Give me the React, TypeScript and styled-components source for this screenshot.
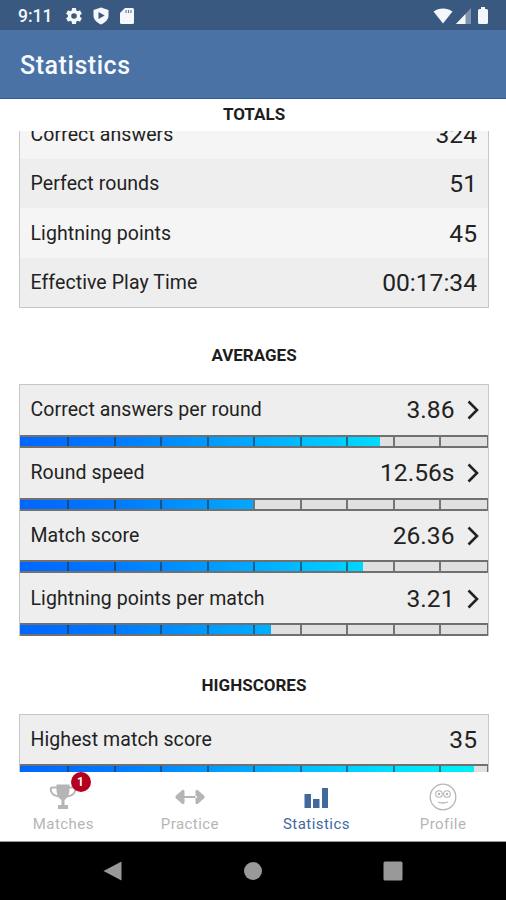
import React from 'react';
import styled, { createGlobalStyle } from 'styled-components';

const GlobalStyle = createGlobalStyle`
  * { box-sizing: border-box; }
  body { margin: 0; background: #fff; font-family: Roboto, sans-serif; color: #222; }
`;

const Screen = styled.div`
  display: flex;
  flex-direction: column;
  width: 506px;
  height: 900px;
  overflow: hidden;
  background: #fff;
`;

const StatusBar = styled.div`
  display: flex;
  flex: none;
  align-items: center;
  height: 30px;
  padding: 1px 15px 0 18px;
  background: #3a5980;
  color: #f4f8fd;
`;

const Clock = styled.span`
  width: 48px;
  font-size: 17.5px;
  font-weight: 500;
  letter-spacing: 0;
  line-height: 20px;
`;

const StatusIcons = styled.div<{ $gap: number; $end?: boolean }>`
  display: flex;
  align-items: center;
  gap: ${(p) => p.$gap}px;
  margin-left: ${(p) => (p.$end ? 'auto' : '0')};
`;

const AppBar = styled.header`
  display: flex;
  flex: none;
  align-items: center;
  height: 69px;
  padding: 4px 20px 0;
  border-bottom: 1px solid #2c5c96;
  background: #4a72a5;
`;

const Title = styled.h1`
  margin: 0;
  color: #f6faff;
  font-size: 25px;
  font-weight: 500;
  letter-spacing: 0.55px;
  line-height: 30px;
`;

const Content = styled.main`
  flex: none;
  height: 673px;
  overflow: hidden;
`;

const Heading = styled.h2<{ $height: number; $top: number }>`
  height: ${(p) => p.$height}px;
  margin: 0;
  padding: ${(p) => p.$top}px 0 0 2px;
  font-size: 17px;
  font-weight: 700;
  line-height: 20px;
  text-align: center;
  color: #1d1d1d;
`;

const Totals = styled.section`
  display: flex;
  flex-direction: column;
  justify-content: flex-end;
  height: 177px;
  margin: 0 17px 0 19px;
  overflow: hidden;
  border: 1px solid #c6c6c6;
  border-top: 0;
`;

const Card = styled.section`
  margin: 0 17px 0 19px;
  border: 1px solid #c6c6c6;
  border-bottom: 0;
  background: #eee;
`;

const Row = styled.div<{ $light?: boolean; $height?: number }>`
  display: flex;
  flex: none;
  align-items: center;
  justify-content: space-between;
  height: ${(p) => p.$height ?? 49.3}px;
  padding: 1px 11px 0 10.5px;
  background: ${(p) => (p.$light ? '#f5f5f5' : '#eee')};
`;

const Label = styled.span`
  font-size: 19.5px;
  letter-spacing: 0.08px;
  line-height: 24px;
`;

const Value = styled.span`
  display: flex;
  align-items: center;
  font-size: 24.6px;
  line-height: 30px;
  letter-spacing: 0;
`;

const Chevron = styled.svg`
  width: 12px;
  height: 20px;
  margin: 0 -1.5px 0 12px;
`;

const Meter = styled.div<{ $height: number }>`
  display: flex;
  position: relative;
  height: ${(p) => p.$height}px;
  border: 2px solid #707070;
  border-width: 2px 1px 2px 0;
  background: #e0e0e0;
`;

const Fill = styled.div`
  height: 100%;
  background: linear-gradient(90deg, #0066ff 0, #0078ff 90px, #00aaff 234px, #00ddff 360px, #00f4f6 468px);
  background-size: 468px 100%;
`;

const Ticks = styled.div`
  position: absolute;
  inset: 0;
  display: grid;
  grid-template-columns: 49px repeat(8, 46.5px) 1fr;
`;

const Tick = styled.i`
  border-right: 2px solid rgba(35, 45, 55, 0.6);
  &:last-child { border: 0; }
`;

const Gap = styled.div<{ $height: number }>`
  height: ${(p) => p.$height}px;
`;

const Tabs = styled.nav`
  display: grid;
  flex: none;
  grid-template-columns: repeat(4, 126.6px);
  height: 70px;
  border-bottom: 1px solid #999;
  background: #fff;
`;

const Tab = styled.div<{ $active?: boolean }>`
  display: flex;
  position: relative;
  flex-direction: column;
  align-items: center;
  padding-top: 11px;
  color: ${(p) => (p.$active ? '#42699d' : '#b5b5b5')};
  font-size: 15px;
  letter-spacing: ${(p) => (p.$active ? '0.45px' : '0.45px')};
  line-height: 20px;
  svg { width: 30px; height: 28px; margin-bottom: 3px; }
`;

const Badge = styled.span`
  position: absolute;
  top: 0;
  left: 70.5px;
  width: 20px;
  height: 20px;
  border-radius: 50%;
  background: #b5001d;
  color: #fff;
  font-size: 12px;
  font-weight: 700;
  letter-spacing: 0;
  line-height: 20px;
  text-align: center;
`;

const SystemBar = styled.footer`
  display: flex;
  flex: none;
  align-items: center;
  justify-content: space-between;
  height: 58px;
  padding: 0 103px 0 102px;
  background: #000;
  svg { width: 20px; height: 20px; }
`;

function Bar({ width, height = 13 }: { width: number; height?: number }) {
  return (
    <Meter $height={height}>
      <Fill style={{ width }} />
      <Ticks>{Array.from({ length: 10 }, (_, i) => <Tick key={i} />)}</Ticks>
    </Meter>
  );
}

const averages = [
  { label: 'Correct answers per round', value: '3.86', width: 360 },
  { label: 'Round speed', value: '12.56s', width: 233 },
  { label: 'Match score', value: '26.36', width: 343 },
  { label: 'Lightning points per match', value: '3.21', width: 251 },
];

const totals = [
  ['Correct answers', '324'],
  ['Perfect rounds', '51'],
  ['Lightning points', '45'],
  ['Effective Play Time', '00:17:34'],
];

export default function App() {
  return (
    <>
      <GlobalStyle />
      <Screen>
        <StatusBar>
          <Clock>9:11</Clock>
          <StatusIcons $gap={11}>
            <svg width="16" height="16" viewBox="2 2 20 20" fill="currentColor"><path d="M19.43 12.98c.04-.32.07-.64.07-.98s-.03-.66-.07-.98l2.11-1.65c.19-.15.24-.42.12-.64l-2-3.46c-.12-.22-.39-.3-.61-.22l-2.49 1c-.52-.4-1.08-.73-1.69-.98l-.38-2.65A.49.49 0 0 0 14 2h-4c-.25 0-.46.18-.49.42l-.38 2.65c-.61.25-1.17.59-1.69.98l-2.49-1c-.23-.09-.49 0-.61.22l-2 3.46c-.13.22-.07.49.12.64l2.11 1.65c-.04.32-.07.65-.07.98s.03.66.07.98l-2.11 1.65c-.19.15-.24.42-.12.64l2 3.46c.12.22.39.3.61.22l2.49-1c.52.4 1.08.73 1.69.98l.38 2.65c.03.24.24.42.49.42h4c.25 0 .46-.18.49-.42l.38-2.65c.61-.25 1.17-.59 1.69-.98l2.49 1c.23.09.49 0 .61-.22l2-3.46a.5.5 0 0 0-.12-.64l-2.11-1.65zM12 15.500a3.500 3.500 0 1 1 0-7 3.500 3.500 0 0 1 0 7z" /></svg>
            <svg width="16" height="18" viewBox="0 0 16 18"><path d="M8 .5 15.500 3v5.500c0 4-3 7-7.500 9-4.500-2-7.500-5-7.500-9V3z" fill="currentColor" /><path d="m5.500 5 6.200 3.500-6.200 3.500z" fill="#3a5980" /></svg>
            <svg width="14" height="16" viewBox="0 0 14 16"><path d="M5 0h7.500Q14 0 14 1.500v13q0 1.500-1.500 1.500h-11Q0 16 0 14.500V5z" fill="currentColor" /><path d="M6 2v3M8.500 2v3M11 2v3" stroke="#3a5980" strokeWidth="1.200" opacity=".75" /></svg>
          </StatusIcons>
          <StatusIcons $gap={3} $end>
            <svg width="20" height="16" viewBox="0 0 20 16"><path d="M.5 3.500C6-.6 14-.6 19.500 3.500L10 15.500z" fill="currentColor" /></svg>
            <svg width="15" height="16" viewBox="0 0 15 16"><path d="M15 0v16H0z" fill="#8094af" /><path d="M9.500 6v10H0z" fill="currentColor" /></svg>
            <svg width="17" height="17" viewBox="1.500 0 17 17"><path d="M8.500 0h4v2h1.500q1.500 0 1.500 1.500v12q0 1.500-1.500 1.500h-7Q5.500 17 5.500 15.500v-12Q5.500 2 7 2h1.500z" fill="currentColor" /></svg>
          </StatusIcons>
        </StatusBar>
        <AppBar><Title>Statistics</Title></AppBar>
        <Content>
          <Heading $height={32} $top={5}>TOTALS</Heading>
          <Totals>
            {totals.map(([label, value], i) => (
              <Row key={label} $light={i % 2 === 0}><Label>{label}</Label><Value>{value}</Value></Row>
            ))}
          </Totals>
          <Heading $height={76} $top={37}>AVERAGES</Heading>
          <Card>
            {averages.map((item) => (
              <React.Fragment key={item.label}>
                <Row $height={49.8}>
                  <Label>{item.label}</Label>
                  <Value>
                    {item.value}
                    <Chevron viewBox="0 0 12 20"><path d="m1.500 1.500 8.500 8.500-8.500 8.500" fill="none" stroke="#222" strokeWidth="2.600" /></Chevron>
                  </Value>
                </Row>
                <Bar width={item.width} />
              </React.Fragment>
            ))}
          </Card>
          <Gap $height={38} />
          <Heading $height={40} $top={1}>HIGHSCORES</Heading>
          <Card>
            <Row $height={49}><Label>Highest match score</Label><Value>35</Value></Row>
            <Bar width={454} height={14} />
          </Card>
        </Content>
        <Tabs>
          <Tab>
            <svg viewBox="0 0 30 28"><path d="M8.500 1.500h13V6c0 6-2 9-5 11v5H20v4H10v-4h3.500v-5c-3-2-5-5-5-11z" fill="currentColor" /><path d="M9 4.500H4.500Q2.500 4.500 2.700 6.500 3 12 10.500 13.500M21 4.500h4.500q2 0 1.800 2Q27 12 19.500 13.500" fill="none" stroke="currentColor" strokeWidth="2" /></svg>
            Matches<Badge>1</Badge>
          </Tab>
          <Tab>
            <svg viewBox="0 0 30 28"><path d="M8 13h14v2H8zM4.500 9.500 7 7.300Q9.300 6 9.500 8.500v11Q9.300 22 7 20.700l-2.500-2.200L.5 15v-2zM25.500 9.500 23 7.300q-2.300-1.300-2.500 1.200v11q.2 2.500 2.500 1.200l2.500-2.200 4-3.500v-2z" fill="currentColor" /></svg>
            Practice
          </Tab>
          <Tab $active>
            <svg viewBox="0 0 30 28"><path d="M3.500 11h6.500v14H3.500zM12 16h6.500v9H12zM21 5h6v20h-6z" fill="currentColor" /></svg>
            Statistics
          </Tab>
          <Tab>
            <svg viewBox="0 0 30 28" fill="none" stroke="currentColor"><circle cx="15" cy="14" r="12.800" strokeWidth="1.300" /><circle cx="11" cy="11" r="3.300" strokeWidth="1.100" /><circle cx="19" cy="11" r="3.300" strokeWidth="1.100" /><circle cx="11" cy="11" r="1.200" fill="currentColor" stroke="none" /><circle cx="19" cy="11" r="1.200" fill="currentColor" stroke="none" /><path d="M10 19q5 2 10 0" strokeWidth="1.300" /></svg>
            Profile
          </Tab>
        </Tabs>
        <SystemBar>
          <svg viewBox="0 0 20 20"><path d="M1.500 10 19.500.5v19z" fill="#999" /></svg>
          <svg viewBox="0 0 20 20"><circle cx="10" cy="10" r="9" fill="#999" /></svg>
          <svg viewBox="0 0 20 20"><rect x=".5" y=".5" width="19" height="19" rx="1.500" fill="#999" /></svg>
        </SystemBar>
      </Screen>
    </>
  );
}
